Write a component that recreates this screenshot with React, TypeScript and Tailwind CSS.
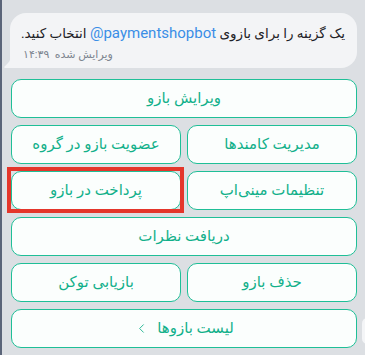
import { ChevronLeft } from "lucide-react";

const font = { fontFamily: "Roboto, 'DejaVu Sans', sans-serif" };

function Btn({ label, full, marked, chevron }: { label: string; full?: boolean; marked?: boolean; chevron?: boolean }) {
    return (
        <div className={`relative ${full ? "col-span-2" : ""}`}>
            <button className="w-full h-[39px] rounded-[10px] border-[1.5px] border-[#1fbf97] bg-[#fbfefd] text-[#12b08a] text-[15px] flex items-center justify-center gap-2">
                <span>{label}</span>
                {chevron && <ChevronLeft className="w-[15px] h-[15px]" strokeWidth={1.4} />}
            </button>
            {marked && (
                <div className="absolute -left-[4px] -right-[3px] -top-[4px] -bottom-[3px] border-[4px] border-[#e4362b] pointer-events-none" />
            )}
        </div>
    );
}

export default function App() {
    return (
        <div dir="rtl" style={font} className="w-[365px] h-[355px] bg-[#dcdfe3] relative overflow-hidden">
            {/* left window edge */}
            <div className="absolute left-0 top-0 bottom-0 w-[2px] bg-[#5b6579]" />

            <div className="pl-[11px] pr-[8px] pt-[13px]">
                {/* message bubble */}
                <div className="relative ml-[-1px] bg-[#f3f4f6] rounded-[16px] rounded-bl-none pr-[12px] pl-[12px] pt-[10px] pb-[6px]">
                    <p className="text-[13.5px] text-[#1e2227] leading-[20px] whitespace-nowrap">
                        یک گزینه را برای بازوی <bdi dir="ltr" className="text-[#3a8ee6] text-[15px]">@paymentshopbot</bdi> انتخاب کنید.
                    </p>
                    <div className="text-[11px] text-[#7d8590] leading-[14px] mt-[5px] text-left pl-[1px]">
                        ویرایش شده&nbsp;&nbsp;۱۴:۳۹
                    </div>
                    <svg className="absolute -left-[6px] bottom-0" width="7" height="12" viewBox="0 0 7 12">
                        <path d="M7 0 V12 H1.5 C0.3 12 0 11 0.8 10.2 C4.5 7 7 4 7 0 Z" fill="#f3f4f6" />
                    </svg>
                </div>

                {/* keyboard */}
                <div className="grid grid-cols-2 gap-x-[6px] gap-y-[7px] mt-[11px]">
                    <Btn label="ویرایش بازو" full />
                    <Btn label="مدیریت کامندها" />
                    <Btn label="عضویت بازو در گروه" />
                    <Btn label="تنظیمات مینی‌اپ" />
                    <Btn label="پرداخت در بازو" marked />
                    <Btn label="دریافت نظرات" full />
                    <Btn label="حذف بازو" />
                    <Btn label="بازیابی توکن" />
                    <Btn label="لیست بازوها" full chevron />
                </div>
            </div>

            {/* scroll handle at right edge */}
            <div className="absolute right-[-8px] top-[318px] w-[11px] h-[26px] rounded-full bg-[#f4f5f7]" />
        </div>
    );
}
